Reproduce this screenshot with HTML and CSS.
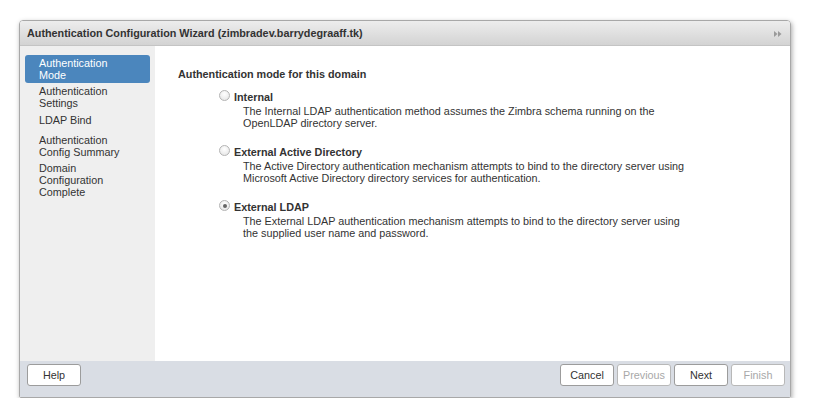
FILE: index.html
```
<!DOCTYPE html>
<html>
<head>
<meta charset="utf-8">
<link rel="stylesheet" href="styles.css">
</head>
<body>
<div class="window">
  <div class="titlebar">
    <span class="title">Authentication Configuration Wizard (zimbradev.barrydegraaff.tk)</span>
    <svg class="tb-icon" width="10" height="8" viewBox="0 0 10 8"><path d="M1 1 L4.5 4 L1 7 Z" fill="#9a9a9a"/><path d="M5 1 L8.5 4 L5 7 Z" fill="#9a9a9a"/></svg>
  </div>
  <div class="main">
    <div class="sidebar">
      <div class="step selected">Authentication<br>Mode</div>
      <div class="step">Authentication<br>Settings</div>
      <div class="step single">LDAP Bind</div>
      <div class="step">Authentication<br>Config Summary</div>
      <div class="step">Domain<br>Configuration<br>Complete</div>
    </div>
    <div class="content">
      <div class="heading">Authentication mode for this domain</div>
      <div class="options">
        <div class="option">
          <div class="opt-title"><span class="radio"></span>Internal</div>
          <div class="opt-desc">The Internal LDAP authentication method assumes the Zimbra schema running on the<br>OpenLDAP directory server.</div>
        </div>
        <div class="option">
          <div class="opt-title"><span class="radio"></span>External Active Directory</div>
          <div class="opt-desc">The Active Directory authentication mechanism attempts to bind to the directory server using<br>Microsoft Active Directory directory services for authentication.</div>
        </div>
        <div class="option">
          <div class="opt-title"><span class="radio checked"></span>External LDAP</div>
          <div class="opt-desc">The External LDAP authentication mechanism attempts to bind to the directory server using<br>the supplied user name and password.</div>
        </div>
      </div>
    </div>
  </div>
  <div class="footer">
    <button class="btn">Help</button>
    <div class="right">
      <button class="btn">Cancel</button>
      <button class="btn disabled">Previous</button>
      <button class="btn">Next</button>
      <button class="btn disabled">Finish</button>
    </div>
  </div>
</div>
</body>
</html>
```
FILE: styles.css
```
html, body {
  margin: 0;
  padding: 0;
  background: #ffffff;
}
body {
  font-family: "Liberation Sans", Arial, sans-serif;
  font-size: 10.8px;
  color: #333333;
}
.window {
  margin: 20px 0 0 19px;
  width: 770px;
  border: 1px solid #a8a8a8;
  border-radius: 4px 4px 2px 2px;
  box-shadow: 1px 2px 5px rgba(0,0,0,0.35);
  overflow: hidden;
  display: flex;
  flex-direction: column;
}
.titlebar {
  height: 24px;
  background: linear-gradient(#ededed, #d3d3d3);
  border-bottom: 1px solid #c4c4c4;
  display: flex;
  align-items: center;
  justify-content: space-between;
  padding: 0 7px 0 7px;
}
.title {
  font-weight: bold;
  font-size: 10.8px;
  color: #333;
}
.tb-icon {
  margin-top: 2px;
}
.main {
  display: flex;
  height: 315px;
}
.sidebar {
  width: 135px;
  background: #efefef;
  padding-top: 9px;
  box-sizing: border-box;
}
.step {
  margin: 0 5px;
  padding: 2px 0 2px 14px;
  line-height: 12px;
  color: #333;
  border-radius: 3px;
}
.step.selected {
  background: #4b86bd;
  color: #ffffff;
}
.step.single {
  padding-top: 3px;
  padding-bottom: 6px;
}
.content {
  flex: 1;
  background: #ffffff;
  padding: 21px 0 0 23px;
}
.heading {
  font-weight: bold;
  line-height: 14px;
}
.options {
  margin-top: 9px;
  padding-left: 41px;
}
.option {
  margin-bottom: 16px;
}
.opt-title {
  font-weight: bold;
  line-height: 14px;
  display: flex;
  align-items: center;
}
.radio {
  display: inline-block;
  width: 9px;
  height: 9px;
  border-radius: 50%;
  border: 1px solid #b4b4b4;
  background: radial-gradient(circle at 50% 35%, #ffffff, #e2e2e2);
  margin-right: 4px;
  margin-top: -3px;
  position: relative;
  box-sizing: content-box;
}
.radio.checked::after {
  content: "";
  position: absolute;
  left: 2.5px;
  top: 2.5px;
  width: 4px;
  height: 4px;
  border-radius: 50%;
  background: #666;
}
.opt-desc {
  margin-top: 1px;
  padding-left: 24px;
  line-height: 12px;
}
.footer {
  height: 36px;
  background: #d9dde4;
  display: flex;
  justify-content: space-between;
  align-items: flex-start;
  padding: 3px 5px 0 7px;
  box-sizing: border-box;
}
.right {
  display: flex;
  gap: 3px;
}
.btn {
  width: 54px;
  height: 22px;
  font-family: "Liberation Sans", Arial, sans-serif;
  font-size: 10.8px;
  color: #333;
  background: #ffffff;
  border: 1px solid #9c9c9c;
  border-radius: 3px;
  padding: 0;
  margin: 0;
}
.btn.disabled {
  color: #a8a8a8;
  border-color: #b8b8b8;
}
```
